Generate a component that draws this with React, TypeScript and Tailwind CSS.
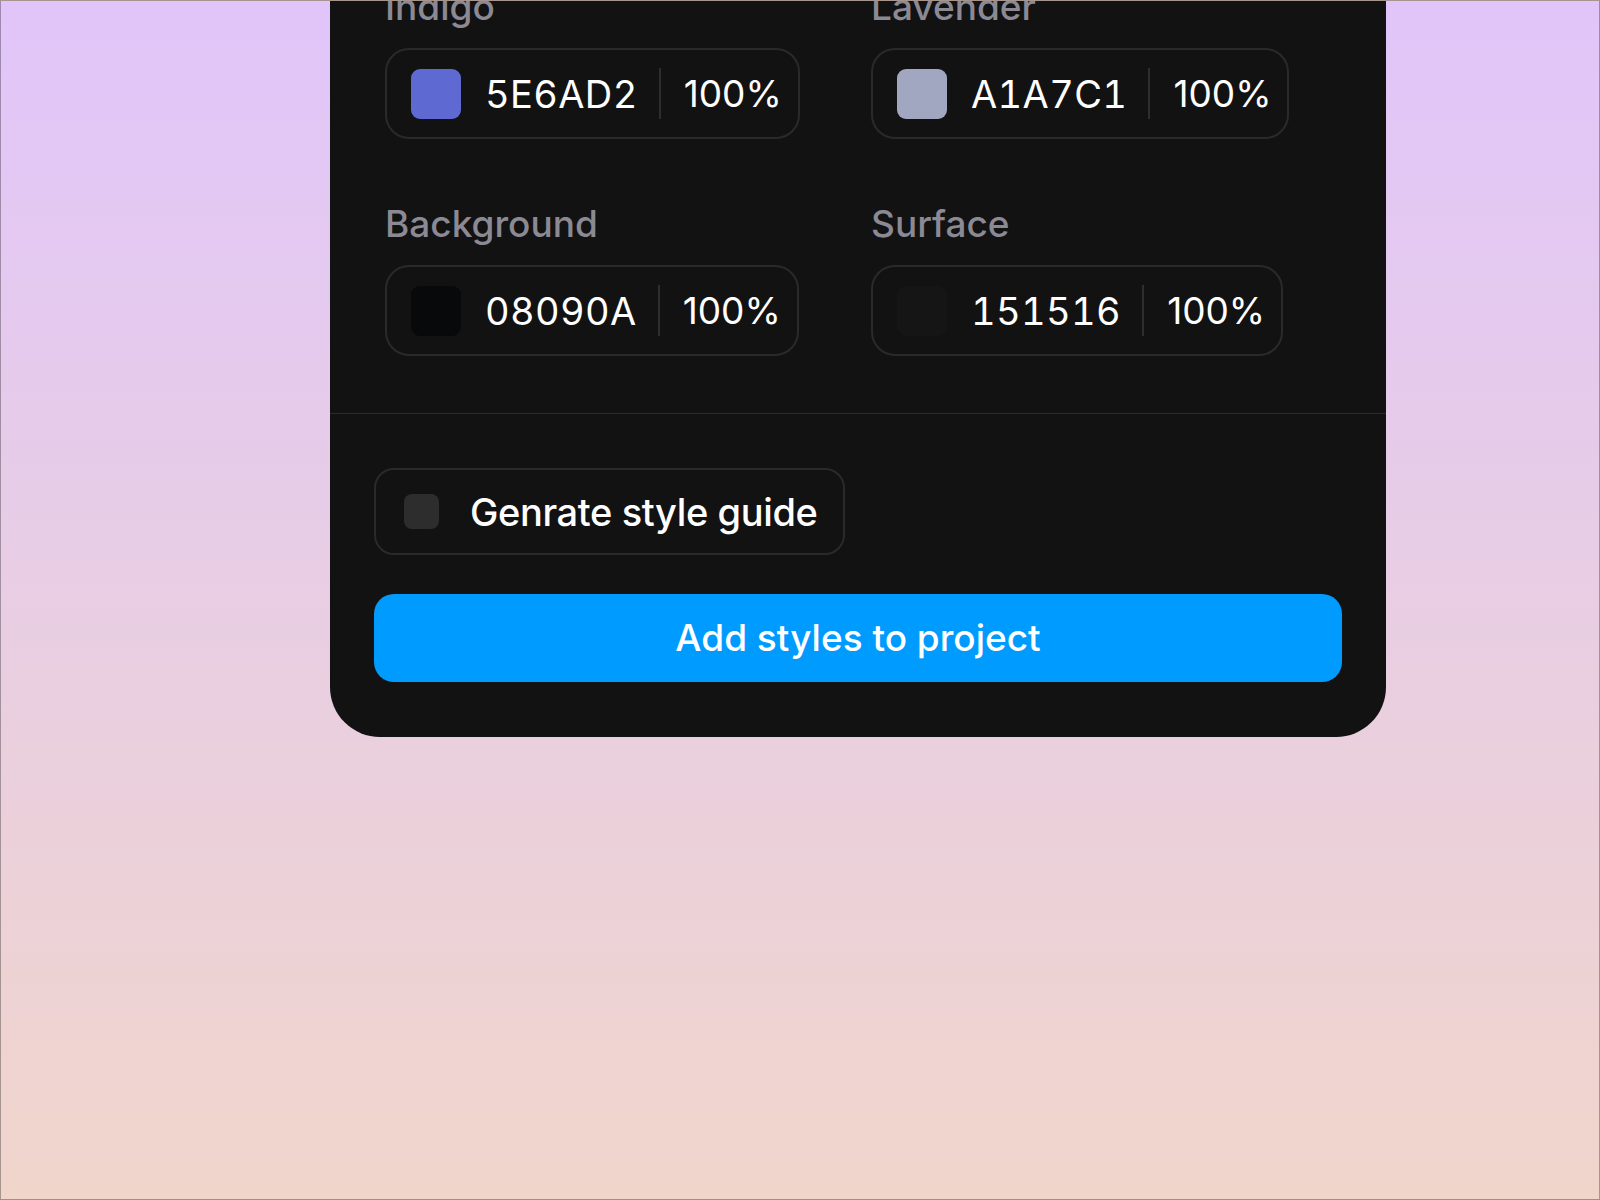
import React from "react";

type ColorItem = { label: string; hex: string; swatch: string };

const rows: ColorItem[][] = [
  [
    { label: "Indigo", hex: "5E6AD2", swatch: "bg-[#5e6ad2]" },
    { label: "Lavender", hex: "A1A7C1", swatch: "bg-[#a1a7c1]" },
  ],
  [
    { label: "Background", hex: "08090A", swatch: "bg-[#08090a]" },
    { label: "Surface", hex: "151516", swatch: "bg-[#151516]" },
  ],
];

function ColorField({ item }: { item: ColorItem }) {
  return (
    <div className="flex flex-col">
      <div className="text-[37px] leading-[44px] text-[#8b8a94] font-medium">
        {item.label}
      </div>
      <div className="mt-[19px] inline-flex h-[91px] w-fit items-center rounded-[24px] border-2 border-[#2a2a2a] pl-[24px] pr-[16px]">
        <div className={`h-[50px] w-[50px] rounded-[9px] ${item.swatch}`} />
        <div className="ml-[24px] text-[38px] leading-none text-white tracking-[0.01em] [font-variant-numeric:tabular-nums]">
          {item.hex}
        </div>
        <div className="ml-[21px] h-[51px] w-[2px] bg-[#2e2e2e]" />
        <div className="ml-[23px] text-[37px] leading-none text-white">
          100%
        </div>
      </div>
    </div>
  );
}

export default function App() {
  return (
    <div
      className="h-[1200px] w-full overflow-hidden border border-black/30 bg-gradient-to-b from-[#e1c5fa] to-[#f0d5cb]"
      style={{ fontFamily: "Inter, 'Noto Sans', sans-serif" }}
    >
      <div className="ml-[329px] mt-[-61px] w-[1056px] rounded-b-[50px] bg-[#121212]">
        <div className="flex flex-col gap-[63px] pb-[57px] pl-[55px] pt-[45px]">
          {rows.map((row, i) => (
            <div key={i} className="grid grid-cols-[486px_1fr]">
              {row.map((item) => (
                <ColorField key={item.label} item={item} />
              ))}
            </div>
          ))}
        </div>
        <div className="h-px w-full bg-[#2a2a2a]" />
        <div className="flex flex-col px-[44px] pb-[55px] pt-[54px]">
          <div className="flex h-[87px] w-[471px] items-center rounded-[20px] border-2 border-[#2a2a2a] pl-[28px]">
            <div className="h-[35px] w-[35px] rounded-[8px] bg-[#2d2d2d]" />
            <span className="ml-[31px] text-[38px] font-medium leading-none text-white tracking-[-0.01em]">
              Genrate style guide
            </span>
          </div>
          <button className="mt-[39px] flex h-[88px] w-full items-center justify-center rounded-[20px] bg-[#009bff] text-[37px] font-medium text-white">
            Add styles to project
          </button>
        </div>
      </div>
    </div>
  );
}
